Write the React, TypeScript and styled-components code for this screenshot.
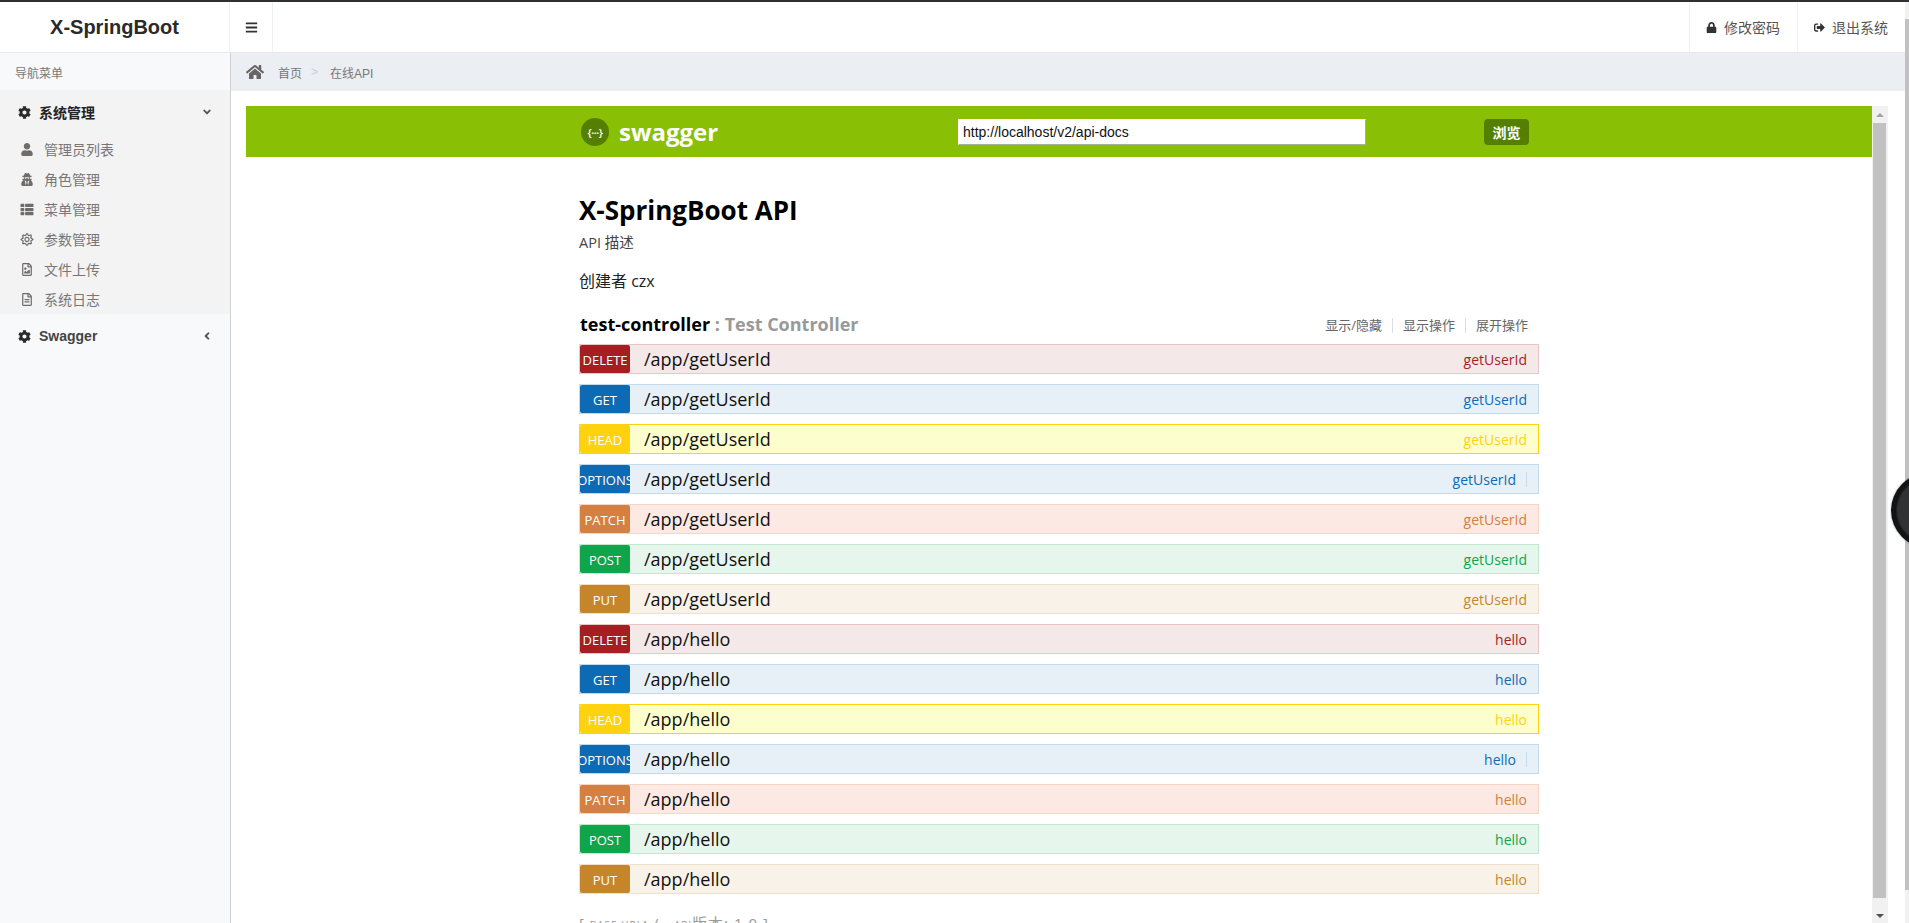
import styled, { createGlobalStyle } from 'styled-components';
import {
  FaAngleDown,
  FaAngleLeft,
  FaBars,
  FaCog,
  FaHome,
  FaLock,
  FaRegFileAlt,
  FaRegFileImage,
  FaRegSun,
  FaSignOutAlt,
  FaThList,
  FaUser,
  FaUserSecret,
} from 'react-icons/fa';

const GlobalStyle = createGlobalStyle`
  * {
    box-sizing: border-box;
  }
  html,
  body {
    margin: 0;
    height: 100%;
    overflow: hidden;
    background: #fff;
    font-family: 'Liberation Sans', 'Noto Sans CJK SC', sans-serif;
  }
`;

const Page = styled.div`
  position: relative;
  height: 100vh;
  display: flex;
  flex-direction: column;
  overflow: hidden;
  border-top: 2px solid #2f3033;
`;

const Body = styled.div`
  flex: 1;
  min-height: 0;
  display: flex;
`;

const Shell = styled.div`
  flex: 1;
  min-width: 0;
  display: flex;
  flex-direction: column;
`;

const TopBar = styled.header`
  height: 51px;
  flex: none;
  display: flex;
  align-items: stretch;
  background: #fff;
  border-bottom: 1px solid #e7e9ec;
`;

const Logo = styled.div`
  width: 230px;
  border-right: 1px solid #eef0f2;
  display: flex;
  align-items: center;
  justify-content: center;
  font-size: 20px;
  font-weight: 700;
  color: #2a2a2a;
`;

const MenuToggle = styled.div`
  width: 43px;
  border-right: 1px solid #eef0f2;
  display: flex;
  align-items: center;
  justify-content: center;
  font-size: 13px;
  color: #333;
`;

const TopActions = styled.div`
  margin-left: auto;
  display: flex;
`;

const TopAction = styled.div`
  display: flex;
  align-items: center;
  gap: 7px;
  padding: 0 17px 0 16px;
  border-left: 1px solid #eef0f2;
  font-size: 14px;
  color: #555;

  svg {
    font-size: 11px;
    color: #333;
  }
`;

const Columns = styled.div`
  flex: 1;
  min-height: 0;
  display: flex;
`;

const Sidebar = styled.aside`
  width: 231px;
  flex: none;
  background: #f8f9fb;
  border-right: 1px solid #cfd1d4;
`;

const NavLabel = styled.div`
  height: 37px;
  padding: 2px 0 0 15px;
  display: flex;
  align-items: center;
  font-size: 12px;
  color: #777;
`;

const NavGroup = styled.div<{ $open?: boolean }>`
  background: ${(p) => (p.$open ? '#f3f3f4' : 'transparent')};
`;

const NavHead = styled.div<{ $open?: boolean }>`
  height: 44px;
  display: flex;
  align-items: center;
  gap: 8px;
  padding: 0 17px 0 18px;
  font-size: 14px;
  font-weight: 700;
  color: ${(p) => (p.$open ? '#222' : '#444')};

  > svg:first-child {
    font-size: 13px;
    color: #2a2a2a;
  }
  > svg:last-child {
    margin-left: auto;
    font-size: 12px;
    color: #555;
  }
`;

const NavItem = styled.div`
  height: 30px;
  display: flex;
  align-items: center;
  padding-left: 20px;
  font-size: 14px;
  color: #777;

  svg {
    width: 14px;
    font-size: 13px;
    color: #6f6c6c;
    margin-right: 10px;
  }
`;

const Main = styled.main`
  flex: 1;
  min-width: 0;
  display: flex;
  flex-direction: column;
`;

const Breadcrumb = styled.nav`
  height: 38px;
  flex: none;
  display: flex;
  align-items: center;
  padding-left: 15px;
  background: #ebeef3;
  font-size: 12px;
  color: #777;

  svg {
    font-size: 18px;
    color: #666;
    margin-right: 14px;
  }
`;

const Crumb = styled.span`
  display: inline-block;
`;

const CrumbSep = styled.span`
  margin: 0 12px 0 9px;
  color: #ccc;
`;

const Frame = styled.div`
  flex: 1;
  min-height: 0;
  margin: 15px 17px 0 15px;
  display: flex;
`;

const Swagger = styled.div`
  flex: 1;
  min-width: 0;
  overflow: hidden;
  background: #fff;
  font-family: 'Open Sans', 'Noto Sans CJK SC', sans-serif;
`;

const SwaggerBar = styled.div`
  height: 51px;
  background: #89bf04;
  display: flex;
  justify-content: center;
`;

const BarInner = styled.div`
  width: 960px;
  display: flex;
  align-items: center;
`;

const LogoCircle = styled.div`
  width: 28px;
  height: 28px;
  margin: 1px 0 0 2px;
  border-radius: 50%;
  background: #547f00;
  color: #fff;
  display: flex;
  align-items: center;
  justify-content: center;
  font-size: 11px;
  font-weight: 600;
  letter-spacing: -0.5px;
`;

const LogoWord = styled.div`
  margin: 0 0 1px 10px;
  width: 339px;
  font-size: 24px;
  font-weight: 700;
  color: #fff;
`;

const UrlInput = styled.div`
  width: 408px;
  height: 26px;
  margin-top: 1px;
  padding-left: 4px;
  display: flex;
  align-items: center;
  background: #fff;
  border: 1px solid #a9b08f;
  border-left-color: #fff;
  border-top-color: #fff;
  font-family: 'Liberation Sans', sans-serif;
  font-size: 14px;
  color: #111;
`;

const Explore = styled.div`
  width: 45px;
  height: 26px;
  margin: 1px 0 0 118px;
  display: flex;
  align-items: center;
  justify-content: center;
  border-radius: 4px;
  background: #547f00;
  color: #fff;
  font-size: 14px;
  font-weight: 700;
`;

const Container = styled.div`
  width: 960px;
  margin: 0 auto;
  padding-top: 37px;
`;

const Title = styled.h1`
  margin: 0;
  font-size: 26px;
  line-height: 32px;
  font-weight: 700;
  color: #000;
`;

const Description = styled.p`
  margin: 7px 0 0;
  font-size: 14.5px;
  line-height: 20px;
  color: #444;
`;

const Creator = styled.p`
  margin: 18px 0 0;
  font-size: 16px;
  line-height: 20px;
  color: #222;
`;

const ResourceHead = styled.div`
  margin-top: 21px;
  display: flex;
  align-items: center;
  height: 24px;
`;

const ResourceName = styled.h2`
  margin: 0 0 0 1px;
  font-size: 18px;
  line-height: 24px;
  font-weight: 700;
  color: #000;

  span {
    color: #999;
  }
`;

const ResourceLinks = styled.div`
  margin: 3px 11px 0 auto;
  display: flex;
  font-size: 13px;
  color: #666;
`;

const ResourceLink = styled.span`
  padding: 0 10px;
  line-height: 15px;
  border-right: 1px solid #ddd;

  &:last-child {
    padding-right: 0;
    border-right: none;
  }
`;

const Rows = styled.div`
  margin-top: 8px;
  display: flex;
  flex-direction: column;
  gap: 10px;
`;

type Method = 'DELETE' | 'GET' | 'HEAD' | 'OPTIONS' | 'PATCH' | 'POST' | 'PUT';

const palette: Record<Method, { main: string; bg: string; border: string }> = {
  DELETE: { main: '#a41e22', bg: '#f5e8e8', border: '#e8c6c7' },
  GET: { main: '#0f6ab4', bg: '#e7f0f7', border: '#c3d9ec' },
  HEAD: { main: '#ffd20f', bg: '#fcffcd', border: '#ffd20f' },
  OPTIONS: { main: '#0f6ab4', bg: '#e7f0f7', border: '#c3d9ec' },
  PATCH: { main: '#d38042', bg: '#fce9e3', border: '#f5d5c3' },
  POST: { main: '#10a54a', bg: '#e7f6ec', border: '#c3e8d1' },
  PUT: { main: '#c5862b', bg: '#f9f2e9', border: '#f0e0ca' },
};

const Row = styled.div<{ $method: Method }>`
  height: 30px;
  display: flex;
  align-items: center;
  background: ${(p) => palette[p.$method].bg};
  border: 1px solid ${(p) => palette[p.$method].border};
`;

const Badge = styled.div<{ $method: Method }>`
  width: 50px;
  height: 28px;
  flex: none;
  overflow: hidden;
  display: flex;
  align-items: center;
  justify-content: center;
  padding-top: 2px;
  border-radius: 2px;
  background: ${(p) => palette[p.$method].main};
  color: #fff;
  font-size: 13px;
  white-space: nowrap;
`;

const RowPath = styled.div`
  margin-left: 14px;
  font-size: 18px;
  color: #111;
`;

const RowLabel = styled.div<{ $method: Method }>`
  margin-left: auto;
  padding-right: 11px;
  font-size: 14px;
  color: ${(p) => palette[p.$method].main};
`;

const OptionsLabel = styled.div`
  margin-left: auto;
  margin-right: 11px;
  padding-right: 10px;
  line-height: 15px;
  font-size: 14px;
  color: #0f6ab4;
  border-right: 1px solid #c3d9ec;
`;

const Footer = styled.div`
  margin-top: 19px;
  line-height: 20px;
  font-size: 15px;
  letter-spacing: 1px;
  color: #999;

  small {
    font-size: 10px;
  }
`;

const ScrollTrack = styled.div`
  width: 16px;
  flex: none;
  display: flex;
  flex-direction: column;
  background: #f1f1f1;
`;

const ScrollCap = styled.div<{ $down?: boolean }>`
  height: ${(p) => (p.$down ? '25px' : '17px')};
  flex: none;
  display: flex;
  justify-content: center;
  align-items: ${(p) => (p.$down ? 'flex-end' : 'center')};
  padding-bottom: ${(p) => (p.$down ? '5px' : '0')};

  &::before {
    content: '';
    border-left: 4px solid transparent;
    border-right: 4px solid transparent;
    border-top: ${(p) => (p.$down ? '4px solid #505050' : 'none')};
    border-bottom: ${(p) => (p.$down ? 'none' : '4px solid #a3a3a3')};
  }
`;

const ScrollThumb = styled.div`
  flex: 1;
  margin: 0 2px 0 1px;
  background: #c1c1c1;
`;

const PageScroll = styled.div`
  width: 4px;
  flex: none;
  background: #f1f1f1;
  padding-top: 17px;
`;

const PageThumb = styled.div`
  height: 871px;
  background: #c1c1c1;
`;

const FloatBall = styled.div`
  position: absolute;
  left: 1891px;
  top: 471px;
  width: 75px;
  height: 75px;
  border-radius: 50%;
  background: radial-gradient(circle at 50% 50%, #303234 0 58%, #111315 62% 92%, #2c4a50 96%);
  box-shadow: 0 0 2px rgba(0, 0, 0, 0.45);
`;

const endpoints: Method[] = ['DELETE', 'GET', 'HEAD', 'OPTIONS', 'PATCH', 'POST', 'PUT'];

const routes = [
  { path: '/app/getUserId', name: 'getUserId' },
  { path: '/app/hello', name: 'hello' },
];

export default function App() {
  return (
    <Page>
      <GlobalStyle />
      <Body>
        <Shell>
          <TopBar>
            <Logo>X-SpringBoot</Logo>
            <MenuToggle>
              <FaBars />
            </MenuToggle>
            <TopActions>
              <TopAction>
                <FaLock />
                修改密码
              </TopAction>
              <TopAction>
                <FaSignOutAlt />
                退出系统
              </TopAction>
            </TopActions>
          </TopBar>
          <Columns>
            <Sidebar>
              <NavLabel>导航菜单</NavLabel>
              <NavGroup $open>
                <NavHead $open>
                  <FaCog />
                  系统管理
                  <FaAngleDown />
                </NavHead>
                <NavItem>
                  <FaUser />
                  管理员列表
                </NavItem>
                <NavItem>
                  <FaUserSecret />
                  角色管理
                </NavItem>
                <NavItem>
                  <FaThList />
                  菜单管理
                </NavItem>
                <NavItem>
                  <FaRegSun />
                  参数管理
                </NavItem>
                <NavItem>
                  <FaRegFileImage />
                  文件上传
                </NavItem>
                <NavItem>
                  <FaRegFileAlt />
                  系统日志
                </NavItem>
              </NavGroup>
              <NavGroup>
                <NavHead>
                  <FaCog />
                  Swagger
                  <FaAngleLeft />
                </NavHead>
              </NavGroup>
            </Sidebar>
            <Main>
              <Breadcrumb>
                <FaHome />
                <Crumb>首页</Crumb>
                <CrumbSep>&gt;</CrumbSep>
                <Crumb>在线API</Crumb>
              </Breadcrumb>
              <Frame>
                <Swagger>
                  <SwaggerBar>
                    <BarInner>
                      <LogoCircle>{'{···}'}</LogoCircle>
                      <LogoWord>swagger</LogoWord>
                      <UrlInput>http://localhost/v2/api-docs</UrlInput>
                      <Explore>浏览</Explore>
                    </BarInner>
                  </SwaggerBar>
                  <Container>
                    <Title>X-SpringBoot API</Title>
                    <Description>API 描述</Description>
                    <Creator>创建者 czx</Creator>
                    <ResourceHead>
                      <ResourceName>
                        test-controller <span>: Test Controller</span>
                      </ResourceName>
                      <ResourceLinks>
                        <ResourceLink>显示/隐藏</ResourceLink>
                        <ResourceLink>显示操作</ResourceLink>
                        <ResourceLink>展开操作</ResourceLink>
                      </ResourceLinks>
                    </ResourceHead>
                    <Rows>
                      {routes.map((route) =>
                        endpoints.map((method) => (
                          <Row key={route.name + method} $method={method}>
                            <Badge $method={method}>{method}</Badge>
                            <RowPath>{route.path}</RowPath>
                            {method === 'OPTIONS' ? (
                              <OptionsLabel>{route.name}</OptionsLabel>
                            ) : (
                              <RowLabel $method={method}>{route.name}</RowLabel>
                            )}
                          </Row>
                        ))
                      )}
                    </Rows>
                    <Footer>
                      [ <small>BASE URL</small>: / , <small>API</small>版本: 1.0 ]
                    </Footer>
                  </Container>
                </Swagger>
                <ScrollTrack>
                  <ScrollCap />
                  <ScrollThumb />
                  <ScrollCap $down />
                </ScrollTrack>
              </Frame>
            </Main>
          </Columns>
        </Shell>
        <PageScroll>
          <PageThumb />
        </PageScroll>
      </Body>
      <FloatBall />
    </Page>
  );
}
